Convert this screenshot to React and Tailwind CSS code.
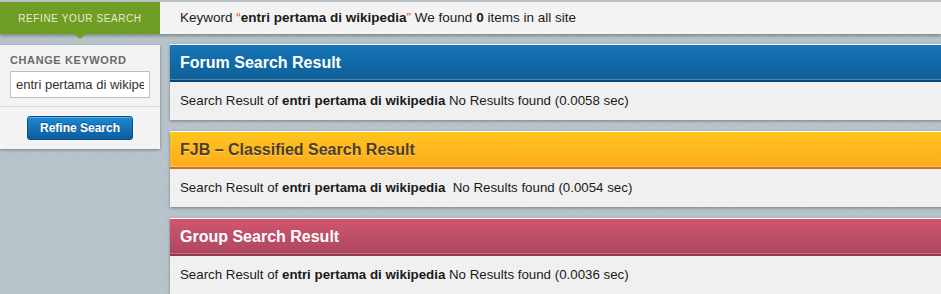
const results = [
  {
    title: 'Forum Search Result',
    head: 'bg-gradient-to-b from-[#1675b7] to-[#0f5f97] border-[#0a4772] text-white',
    time: '0.0058',
    gap: ' ',
  },
  {
    title: 'FJB – Classified Search Result',
    head: 'bg-gradient-to-b from-[#ffc51d] to-[#fdac1f] border-[#c5751a] text-[#4d3e26] [text-shadow:0_1px_0_rgba(255,255,255,0.35)]',
    time: '0.0054',
    gap: '\u00a0 ',
  },
  {
    title: 'Group Search Result',
    head: 'bg-gradient-to-b from-[#d1566f] to-[#ad465f] border-[#94384f] text-white',
    time: '0.0036',
    gap: ' ',
  },
];

const keyword = 'entri pertama di wikipedia';

const ResultCard = ({ item }) => (
  <div className="bg-[#f0f0f0] border-t border-white shadow-[0_1px_3px_rgba(0,0,0,0.35)]">
    <div className={`h-[37px] border-b-2 pl-[10px] flex items-center text-[16px] font-bold shadow-[inset_0_-1px_0_rgba(255,255,255,0.25)] ${item.head}`}>
      {item.title}
    </div>
    <div className="h-[38px] pl-[10px] flex items-center text-[13.3px] text-[#1a1a1a]">
      <span className="whitespace-pre">
        Search Result of <b>{keyword}</b>{item.gap}No Results found ({item.time} sec)
      </span>
    </div>
  </div>
);

export default function App() {
  return (
    <div className="w-[941px] h-[294px] overflow-hidden bg-[#b6c2c9] bg-[repeating-linear-gradient(135deg,rgba(255,255,255,0.06)_0px,rgba(255,255,255,0.06)_1px,transparent_1px,transparent_3px)] font-['Liberation_Sans',Arial,sans-serif] pt-[2px]">
      <div className="h-[32px] bg-[#f3f3f3] flex items-stretch shadow-[0_2px_3px_rgba(0,0,0,0.3)]">
        <div className="relative w-[160px] bg-[#6f9e24] flex items-center justify-center text-[10px] tracking-[0.6px] text-[#e4eed4]">
          REFINE YOUR SEARCH
          <span className="absolute left-[74px] top-full w-0 h-0 border-l-[6px] border-r-[6px] border-t-[5px] border-l-transparent border-r-transparent border-t-[#6f9e24]"></span>
        </div>
        <div className="pl-[20px] flex items-center text-[13.5px] text-[#1a1a1a]">
          <span className="whitespace-pre">
            Keyword <span className="text-[#e0531c]">“</span><b>{keyword}</b><span className="text-[#e0531c]">”</span> We found <b>0</b> items in all site
          </span>
        </div>
      </div>

      <div className="flex gap-[10px] mt-[10px]">
        <div className="w-[160px] shrink-0 self-start bg-[#f3f3f3] shadow-[0_1px_3px_rgba(0,0,0,0.35)] mt-px">
          <div className="px-[10px] pt-[8px] pb-[8px] border-b border-[#dadada]">
            <div className="text-[11px] font-bold tracking-[0.6px] text-[#6a6a6a] leading-[14px]">CHANGE KEYWORD</div>
            <input
              readOnly
              value="entri pertama di wikipedia"
              className="mt-[4px] w-[140px] h-[27px] border border-[#bdbdbd] bg-white px-[5px] text-[13px] text-[#333] outline-none font-['Liberation_Sans',Arial,sans-serif]"
            />
          </div>
          <div className="flex justify-center pt-[9px] pb-[9px]">
            <button className="w-[106px] h-[24px] rounded-[3px] bg-gradient-to-b from-[#1c8ad5] to-[#0e5c9c] border border-[#0b4e84] text-white text-[12px] font-bold shadow-[inset_0_1px_0_rgba(255,255,255,0.3)] [text-shadow:0_-1px_0_rgba(0,0,0,0.3)]">
              Refine Search
            </button>
          </div>
        </div>

        <div className="flex-1 -mr-[4px] flex flex-col gap-[11px]">
          {results.map((item) => (
            <ResultCard key={item.title} item={item} />
          ))}
        </div>
      </div>
    </div>
  );
}
